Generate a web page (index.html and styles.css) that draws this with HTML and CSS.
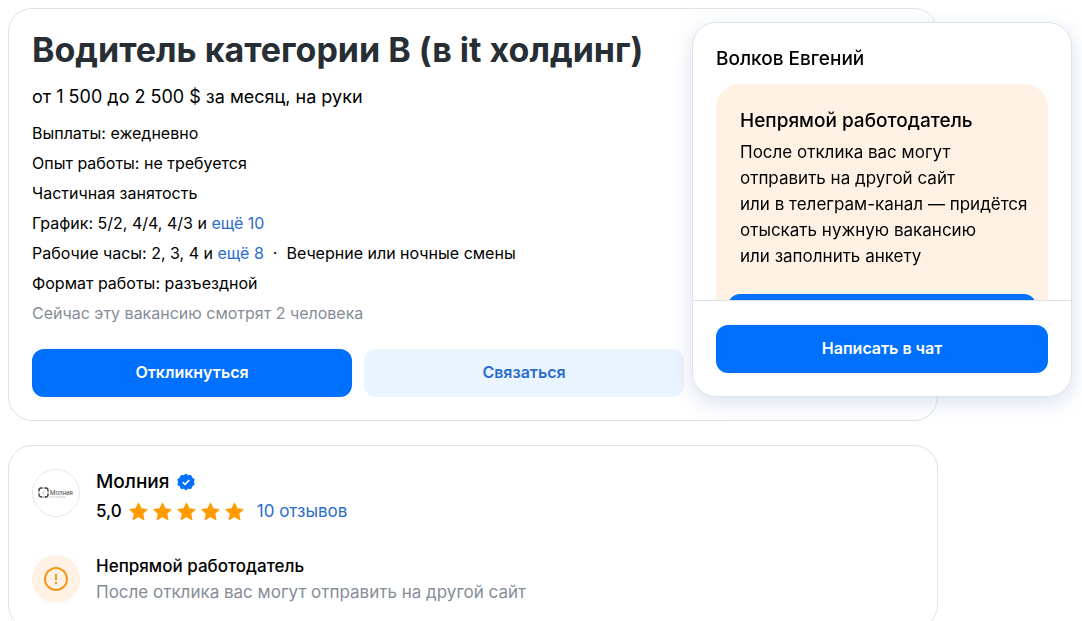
FILE: index.html
```html
<!DOCTYPE html>
<html lang="ru">
<head>
  <meta charset="UTF-8" />
  <meta name="viewport" content="width=device-width, initial-scale=1.0"/>
  <title>Водитель категории В (в it холдинг)</title>
  <link rel="stylesheet" href="styles.css">
</head>
<body>
  <main class="page">
    <section class="card vacancy">
      <h1>Водитель категории В (в it холдинг)</h1>
      <p class="salary">от 1 500 до 2 500 $ за месяц, на руки</p>
      <div class="details">
        <p>Выплаты: ежедневно</p>
        <p>Опыт работы: не требуется</p>
        <p>Частичная занятость</p>
        <p>График: 5/2, 4/4, 4/3 и <a href="#">ещё 10</a></p>
        <p>Рабочие часы: 2, 3, 4 и <a href="#">ещё 8</a> &nbsp;·&nbsp; Вечерние или ночные смены</p>
        <p>Формат работы: разъездной</p>
        <p class="muted">Сейчас эту вакансию смотрят 2 человека</p>
      </div>
      <div class="actions">
        <button type="button" class="btn btn-primary">Откликнуться</button>
        <button type="button" class="btn btn-secondary">Связаться</button>
      </div>
    </section>

    <section class="card company">
      <div class="row">
        <div class="logo">
          <svg width="36" height="12" viewBox="0 0 36 12" fill="none">
            <rect x="1" y="1" width="9" height="9" rx="3" stroke="#888" stroke-width="1"/>
            <path d="M1 4V3a2 2 0 0 1 2-2h1M7 1h1a2 2 0 0 1 2 2v1M10 7v1a2 2 0 0 1-2 2H7M4 10H3a2 2 0 0 1-2-2V7" stroke="#444" stroke-width="1.3"/>
            <path d="M6 3.5L5 6h1L5 8" stroke="#bbb" stroke-width=".6"/>
            <text x="12" y="8" class="logo-name">Молния</text>
            <path d="M12 10h16" stroke="#aaa" stroke-width=".8" stroke-dasharray="1.5 .5"/>
          </svg>
        </div>
        <div>
          <h2 class="company-name">
            Молния
            <svg width="18" height="18" viewBox="0 0 18 18">
              <path d="M9 1l2.200 1.700 2.700-.3 1 2.500 2.300 1.500L16.500 9l.7 2.600-2.300 1.500-1 2.500-2.700-.3L9 17l-2.200-1.700-2.700.3-1-2.500-2.300-1.500L1.500 9 .8 6.400l2.300-1.500 1-2.500 2.700.3z" fill="#0070ff" stroke="#0070ff" stroke-linejoin="round"/>
              <path d="M5.700 9.200l2.300 2.200 4.300-4.300" fill="none" stroke="#fff" stroke-width="1.5"/>
            </svg>
          </h2>
          <div class="rating">
            <span class="score">5,0</span>
            <span class="stars">
              <svg viewBox="0 0 20 20"><path d="M10 2l2.500 5.300 5.700.7-4.200 4 1.100 5.700L10 14.900 4.900 17.700 6 12 1.800 8l5.700-.7z"/></svg>
              <svg viewBox="0 0 20 20"><path d="M10 2l2.500 5.300 5.700.7-4.200 4 1.100 5.700L10 14.900 4.900 17.700 6 12 1.800 8l5.700-.7z"/></svg>
              <svg viewBox="0 0 20 20"><path d="M10 2l2.500 5.300 5.700.7-4.200 4 1.100 5.700L10 14.900 4.900 17.700 6 12 1.800 8l5.700-.7z"/></svg>
              <svg viewBox="0 0 20 20"><path d="M10 2l2.500 5.300 5.700.7-4.200 4 1.100 5.700L10 14.900 4.900 17.700 6 12 1.800 8l5.700-.7z"/></svg>
              <svg viewBox="0 0 20 20"><path d="M10 2l2.500 5.300 5.700.7-4.200 4 1.100 5.700L10 14.900 4.900 17.700 6 12 1.800 8l5.700-.7z"/></svg>
            </span>
            <a href="#">10 отзывов</a>
          </div>
        </div>
      </div>
      <div class="row row-warning">
        <div class="warning-icon">
          <svg width="24" height="24" viewBox="0 0 24 24" fill="none" stroke="#f29a1f" stroke-width="2">
            <circle cx="12" cy="12" r="11"/>
            <path d="M12 7v6M12 15v2"/>
          </svg>
        </div>
        <div>
          <h3>Непрямой работодатель</h3>
          <p class="muted">После отклика вас могут отправить на другой сайт</p>
        </div>
      </div>
    </section>
  </main>

  <aside class="contact">
    <div class="contact-body">
      <h2>Волков Евгений</h2>
      <div class="notice">
        <h2>Непрямой работодатель</h2>
        <p>После отклика вас могут<br>отправить на другой сайт<br>или в телеграм-канал — придётся<br>отыскать нужную вакансию<br>или заполнить анкету</p>
        <button type="button" class="btn btn-primary" aria-label="Откликнуться"></button>
      </div>
    </div>
    <div class="contact-footer">
      <button type="button" class="btn btn-primary">Написать в чат</button>
    </div>
  </aside>
</body>
</html>
```
FILE: styles.css
```css
* {
  box-sizing: border-box;
}
body {
  margin: 0;
  height: 100vh;
  overflow: hidden;
  font-family: Inter, "Liberation Sans", sans-serif;
  font-size: 17px;
  line-height: 24px;
  color: #000;
  background: #fff;
}
h1, h2, h3, p {
  margin: 0;
}
h1 {
  font-size: 34px;
  line-height: 36px;
  font-weight: 700;
  color: #272f35;
}
h2 {
  font-size: 19px;
  line-height: 26px;
  font-weight: 500;
}
h3 {
  font-size: 17px;
  line-height: 26px;
  font-weight: 500;
}
a {
  color: #2b6dcb;
  text-decoration: none;
}
.page {
  max-width: 946px;
  padding: 8px;
  display: flex;
  flex-direction: column;
  gap: 24px;
}
.card {
  padding: 23px;
  border: 1px solid #dce3eb;
  border-radius: 24px;
}
.salary {
  margin: 16px 0 11px;
  font-size: 18px;
  line-height: 26px;
}
.details {
  display: flex;
  flex-direction: column;
  gap: 6px;
  font-size: 16px;
}
.muted {
  color: #858d98;
}
.actions {
  display: flex;
  gap: 12px;
  margin-top: 24px;
}
.btn {
  height: 48px;
  padding: 0 12px 2px;
  border: none;
  border-radius: 12px;
  font-family: inherit;
  font-size: 16px;
  cursor: pointer;
}
.btn-primary {
  background: #0070ff;
  color: #fff;
  font-weight: 600;
}
.btn-secondary {
  background: #ebf5ff;
  color: #2b6dcb;
  font-weight: 600;
}
.actions .btn {
  width: 320px;
}

/* company */
.company {
  display: flex;
  flex-direction: column;
  gap: 30px;
}
.row {
  display: flex;
  gap: 16px;
}
.row-warning {
  align-items: center;
}
.row-warning p {
  line-height: 26px;
}
.logo, .warning-icon {
  display: flex;
  align-items: center;
  justify-content: center;
  width: 48px;
  height: 48px;
  border-radius: 50%;
}
.logo {
  border: 1px solid #e6e8eb;
}
.logo-name {
  font-size: 6px;
  fill: #444;
}
.warning-icon {
  background: #fff2e5;
}
.company-name {
  display: flex;
  align-items: center;
  gap: 8px;
}
.rating {
  display: flex;
  align-items: center;
  margin-top: 4px;
}
.score {
  font-weight: 500;
}
.stars {
  display: flex;
  gap: 3px;
  margin: 0 12px 0 6px;
}
.stars svg {
  width: 21px;
  height: 21px;
  fill: #ff9900;
  stroke: #ff9900;
  stroke-linejoin: round;
}

/* floating contact card */
.contact {
  position: fixed;
  top: 22px;
  right: 10px;
  width: 380px;
  background: #fff;
  border: 1px solid #dce3eb;
  border-radius: 24px;
  box-shadow: 0 6px 20px rgba(112, 136, 187, 0.25);
}
.contact-body {
  height: 277px;
  padding: 23px 23px 0;
  overflow: hidden;
}
.notice {
  margin-top: 12px;
  padding: 24px;
  background: #fff2e5;
  border-radius: 24px;
}
.notice p {
  margin: 5px -12px 25px 0;
  line-height: 26px;
}
.notice .btn {
  display: block;
  width: calc(100% + 24px);
  margin: 0 -12px;
}
.contact-footer {
  padding: 24px 23px 23px;
  border-top: 1px solid #dce3eb;
}
.contact-footer .btn {
  width: 100%;
}
```
